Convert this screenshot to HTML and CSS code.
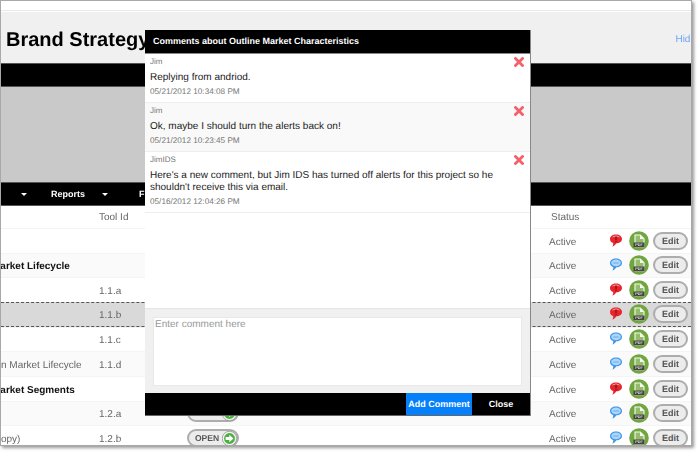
FILE: index.html
```html
<!DOCTYPE html>
<html lang="en">
<head>
<meta charset="utf-8">
<title>Brand Strategy</title>
<link rel="stylesheet" href="styles.css">
</head>
<body>
<svg class="defs" width="0" height="0" aria-hidden="true">
  <symbol id="alert" viewBox="0 0 14 15">
    <path d="M7 1.500C3.400 1.500 1 3.400 1 6c0 2 1.200 3.500 3.200 4.100.1 1.300-.2 2.500-.8 3.600 1.700-.6 3.100-1.800 4-3.400 3.300-.1 5.600-1.900 5.600-4.300 0-2.600-2.400-4.500-6-4.500z" fill="#e8242c"/>
    <path d="M2.800 4.500C3.600 3.200 5.200 2.500 7 2.500c1.800 0 3.400.7 4.200 2-2.300-.9-6.100-.9-8.400 0z" fill="#fb9a9c"/>
    <rect x="6.300" y="3.500" width="1.400" height="3.800" fill="#8c1218"/>
    <rect x="6.300" y="8" width="1.400" height="1.300" fill="#8c1218"/>
  </symbol>
  <symbol id="note" viewBox="0 0 14 15">
    <path d="M7 1.500C3.400 1.500 1 3.400 1 6c0 2 1.200 3.500 3.200 4.100.1 1.300-.2 2.500-.8 3.600 1.700-.6 3.100-1.800 4-3.400 3.300-.1 5.600-1.900 5.600-4.300 0-2.600-2.400-4.500-6-4.500z" fill="#3f97ea"/>
    <ellipse cx="7" cy="5.800" rx="4.800" ry="3.400" fill="#a9d6fa"/>
    <path d="M4.600 5.400h1v1h-1zM6.500 5.400h1v1h-1zM8.400 5.400h1v1h-1z" fill="#4a86c4"/>
  </symbol>
  <symbol id="pdf" viewBox="0 0 20 20">
    <circle cx="10" cy="10" r="9.800" fill="#71a63f"/>
    <path d="M6 4h5.300L15 7.700V16H6z" fill="#94bd6b" stroke="#f6f9f0" stroke-width="1.100"/>
    <path d="M11 4v4h4z" fill="#f6f9f0"/>
    <rect x="4.500" y="11.500" width="11" height="4.800" fill="#45473f"/>
    <text x="10" y="15.200" class="pdf-label">PDF</text>
  </symbol>
  <symbol id="go" viewBox="0 0 16 16">
    <circle cx="8" cy="8" r="7.700" fill="#f2f2f2" stroke="#8f8f8f" stroke-width=".8"/>
    <circle cx="8" cy="8" r="5.800" fill="#49b13c"/>
    <path d="M3.800 6.500h4V4l4.400 4-4.400 4V9.500h-4z" fill="#fff"/>
  </symbol>
  <symbol id="del" viewBox="0 0 10 10">
    <path d="M1.500 1.500l7 7M8.500 1.500l-7 7" stroke="#f2616c" stroke-width="2.800" stroke-linecap="square"/>
  </symbol>
</svg>

<div class="window">
  <header class="masthead">
    <h1 class="title">Brand Strategy</h1>
    <a class="hide-link">Hide</a>
  </header>
  <div class="bar"></div>
  <div class="band"></div>
  <nav class="bar nav">
    <span class="caret"></span>
    <span class="nav-item">Reports</span>
    <span class="caret"></span>
    <span class="nav-item">Files</span>
  </nav>

  <div class="table">
    <div class="row head"><span></span><span>Tool Id</span><span></span><span class="status">Status</span></div>
    <div class="row"><span></span><span></span><span></span><span>Active</span><svg class="bubble"><use href="#alert"/></svg><svg class="pdf"><use href="#pdf"/></svg><a class="edit">Edit</a></div>
    <div class="row alt"><span class="group">Market Lifecycle</span><span></span><span></span><span>Active</span><svg class="bubble"><use href="#note"/></svg><svg class="pdf"><use href="#pdf"/></svg><a class="edit">Edit</a></div>
    <div class="row"><span></span><span>1.1.a</span><span></span><span>Active</span><svg class="bubble"><use href="#alert"/></svg><svg class="pdf"><use href="#pdf"/></svg><a class="edit">Edit</a></div>
    <div class="row selected"><span></span><span>1.1.b</span><span></span><span>Active</span><svg class="bubble"><use href="#alert"/></svg><svg class="pdf"><use href="#pdf"/></svg><a class="edit">Edit</a></div>
    <div class="row"><span></span><span>1.1.c</span><span></span><span>Active</span><svg class="bubble"><use href="#note"/></svg><svg class="pdf"><use href="#pdf"/></svg><a class="edit">Edit</a></div>
    <div class="row alt"><span class="clip">n Market Lifecycle</span><span>1.1.d</span><span></span><span>Active</span><svg class="bubble"><use href="#note"/></svg><svg class="pdf"><use href="#pdf"/></svg><a class="edit">Edit</a></div>
    <div class="row"><span class="group">Market Segments</span><span></span><span></span><span>Active</span><svg class="bubble"><use href="#alert"/></svg><svg class="pdf"><use href="#pdf"/></svg><a class="edit">Edit</a></div>
    <div class="row alt"><span></span><span>1.2.a</span><span><a class="open">OPEN<svg class="go"><use href="#go"/></svg></a></span><span>Active</span><svg class="bubble"><use href="#note"/></svg><svg class="pdf"><use href="#pdf"/></svg><a class="edit">Edit</a></div>
    <div class="row"><span class="copy">opy)</span><span>1.2.b</span><span><a class="open">OPEN<svg class="go"><use href="#go"/></svg></a></span><span>Active</span><svg class="bubble"><use href="#note"/></svg><svg class="pdf"><use href="#pdf"/></svg><a class="edit">Edit</a></div>
  </div>

  <section class="modal">
    <h2 class="modal-title">Comments about Outline Market Characteristics</h2>
    <div class="comments">
      <article class="comment">
        <div class="comment-body">
          <div class="author">Jim</div>
          <p class="message">Replying from andriod.</p>
          <div class="stamp">05/21/2012 10:34:08 PM</div>
        </div>
        <svg class="delete"><use href="#del"/></svg>
      </article>
      <article class="comment shaded">
        <div class="comment-body">
          <div class="author">Jim</div>
          <p class="message">Ok, maybe I should turn the alerts back on!</p>
          <div class="stamp">05/21/2012 10:23:45 PM</div>
        </div>
        <svg class="delete"><use href="#del"/></svg>
      </article>
      <article class="comment">
        <div class="comment-body">
          <div class="author">JimIDS</div>
          <p class="message">Here's a new comment, but Jim IDS has turned off alerts for this project so he shouldn't receive this via email.</p>
          <div class="stamp">05/16/2012 12:04:26 PM</div>
        </div>
        <svg class="delete"><use href="#del"/></svg>
      </article>
    </div>
    <div class="composer">
      <div class="input">Enter comment here</div>
    </div>
    <div class="modal-actions">
      <a class="btn primary">Add Comment</a>
      <a class="btn">Close</a>
    </div>
  </section>
</div>
</body>
</html>
```
FILE: styles.css
```css
* { box-sizing: border-box; }

html, body { margin: 0; padding: 0; background: #fff; }

body {
  width: 700px;
  height: 454px;
  overflow: hidden;
  font-family: "Liberation Sans", Arial, sans-serif;
}

.defs { position: absolute; }

.window {
  position: relative;
  width: 692px;
  height: 446px;
  overflow: hidden;
  background: #fff;
  border: 1px solid #a8a8a8;
  box-shadow: 2px 2px 3px rgba(0, 0, 0, .4);
  filter: blur(.35px);
  text-rendering: geometricPrecision;
}

.masthead {
  display: flex;
  justify-content: space-between;
  align-items: center;
  height: 53px;
  margin-top: 9px;
  padding: 0 0 0 5px;
  background: #f0f0f0;
  border-top: 1px solid #e9e9e9;
  box-shadow: inset 0 1px 0 #fff;
}

.title {
  margin: 7px 0 0;
  font-size: 20px;
  font-weight: bold;
  color: #000;
}

.hide-link {
  margin-right: -5px;
  margin-top: 4px;
  font-size: 10px;
  color: #6ea4f5;
}

.bar {
  height: 24px;
  background: #000;
  border-top: 1px solid #555;
  border-bottom: 1px solid #555;
}

.band { height: 95px; background: #c9c9c9; }

.nav {
  display: flex;
  align-items: center;
  color: #fff;
  font-size: 9px;
  font-weight: bold;
}

.caret {
  width: 0;
  height: 0;
  margin-left: 20px;
  border-left: 3px solid transparent;
  border-right: 3px solid transparent;
  border-top: 3px solid #fff;
}

.nav-item { margin-left: 24px; width: 33px; }
.nav-item + .caret { margin-left: 18px; }
.caret + .nav-item:last-child { margin-left: 31px; }

.table { font-size: 10px; color: #666; }

.row {
  display: grid;
  grid-template-columns: 98px 88px 362px 60px 20px 24px 35px;
  align-items: center;
  height: 24.67px;
  padding-top: 1px;
  border-top: 1px solid #f4f4f4;
}

.row.head { height: 22px; padding-top: 0; border-top: 0; }

.row:not(.head) > span { padding-top: 2px; }

.row.alt { background: #fafafa; }

.row.selected {
  background: #d9d9d9;
  border-top: 1px dashed #555;
  border-bottom: 1px dashed #555;
}

.status { padding-left: 2px; }

.group {
  margin-left: -9px;
  white-space: nowrap;
  font-weight: bold;
  color: #111;
}

.clip { white-space: nowrap; }

.copy { color: #666; }

.bubble { width: 14px; height: 15px; margin-top: -2px; }

.pdf { width: 20px; height: 20px; margin-top: -1px; }

.pdf-label {
  font-size: 3.800px;
  font-weight: bold;
  fill: #dcdcdc;
  text-anchor: middle;
}

.edit {
  display: flex;
  align-items: center;
  justify-content: center;
  width: 35px;
  height: 18px;
  margin-top: -1px;
  border: 2px solid #adadad;
  border-radius: 9px;
  background: #ececec;
  font-size: 9px;
  font-weight: bold;
  color: #555;
}

.open {
  display: flex;
  align-items: center;
  justify-content: space-between;
  width: 52px;
  height: 18px;
  margin-top: -3px;
  padding-left: 6px;
  border: 2px solid #adadad;
  border-radius: 9px;
  background: #ececec;
  font-size: 8.500px;
  font-weight: bold;
  color: #555;
}

.go { width: 15px; height: 15px; }

.modal {
  position: absolute;
  left: 144px;
  top: 29px;
  display: flex;
  flex-direction: column;
  width: 386px;
  height: 386px;
  background: #fff;
  border-right: 1px solid #888;
}

.modal-title {
  height: 24px;
  margin: 0;
  padding: 0 0 0 8px;
  line-height: 23px;
  font-size: 9px;
  font-weight: bold;
  color: #fff;
  background: #000;
  border-bottom: 1px solid #888;
}

.comments { flex: 1; }

.comment {
  display: flex;
  justify-content: space-between;
  padding: 3px 6px 5px 5px;
  border-bottom: 1px solid #eee;
}

.comment.shaded { background: #f9f9f9; }

.comment-body { width: 352px; }

.author { font-size: 8px; line-height: 10px; color: #777; }

.message {
  margin: 5px 0 3px;
  font-size: 10px;
  line-height: 12px;
  color: #222;
}

.stamp { font-size: 8.200px; line-height: 10px; color: #777; }

.delete { width: 10px; height: 10px; flex: none; }

.composer {
  height: 85px;
  padding: 8px;
  background: #f0f0f0;
  border-top: 1px solid #e4e4e4;
}

.input {
  height: 69px;
  padding: 1px;
  background: #fff;
  border: 1px solid #e8e8e8;
  font-size: 10px;
  color: #999;
}

.modal-actions {
  display: flex;
  justify-content: flex-end;
  height: 23px;
  background: #000;
  border-bottom: 1px solid #666;
}

.btn {
  display: flex;
  align-items: center;
  justify-content: center;
  width: 58px;
  font-size: 9px;
  font-weight: bold;
  color: #fff;
}

.btn.primary { width: 66px; background: #0680fa; }
```
